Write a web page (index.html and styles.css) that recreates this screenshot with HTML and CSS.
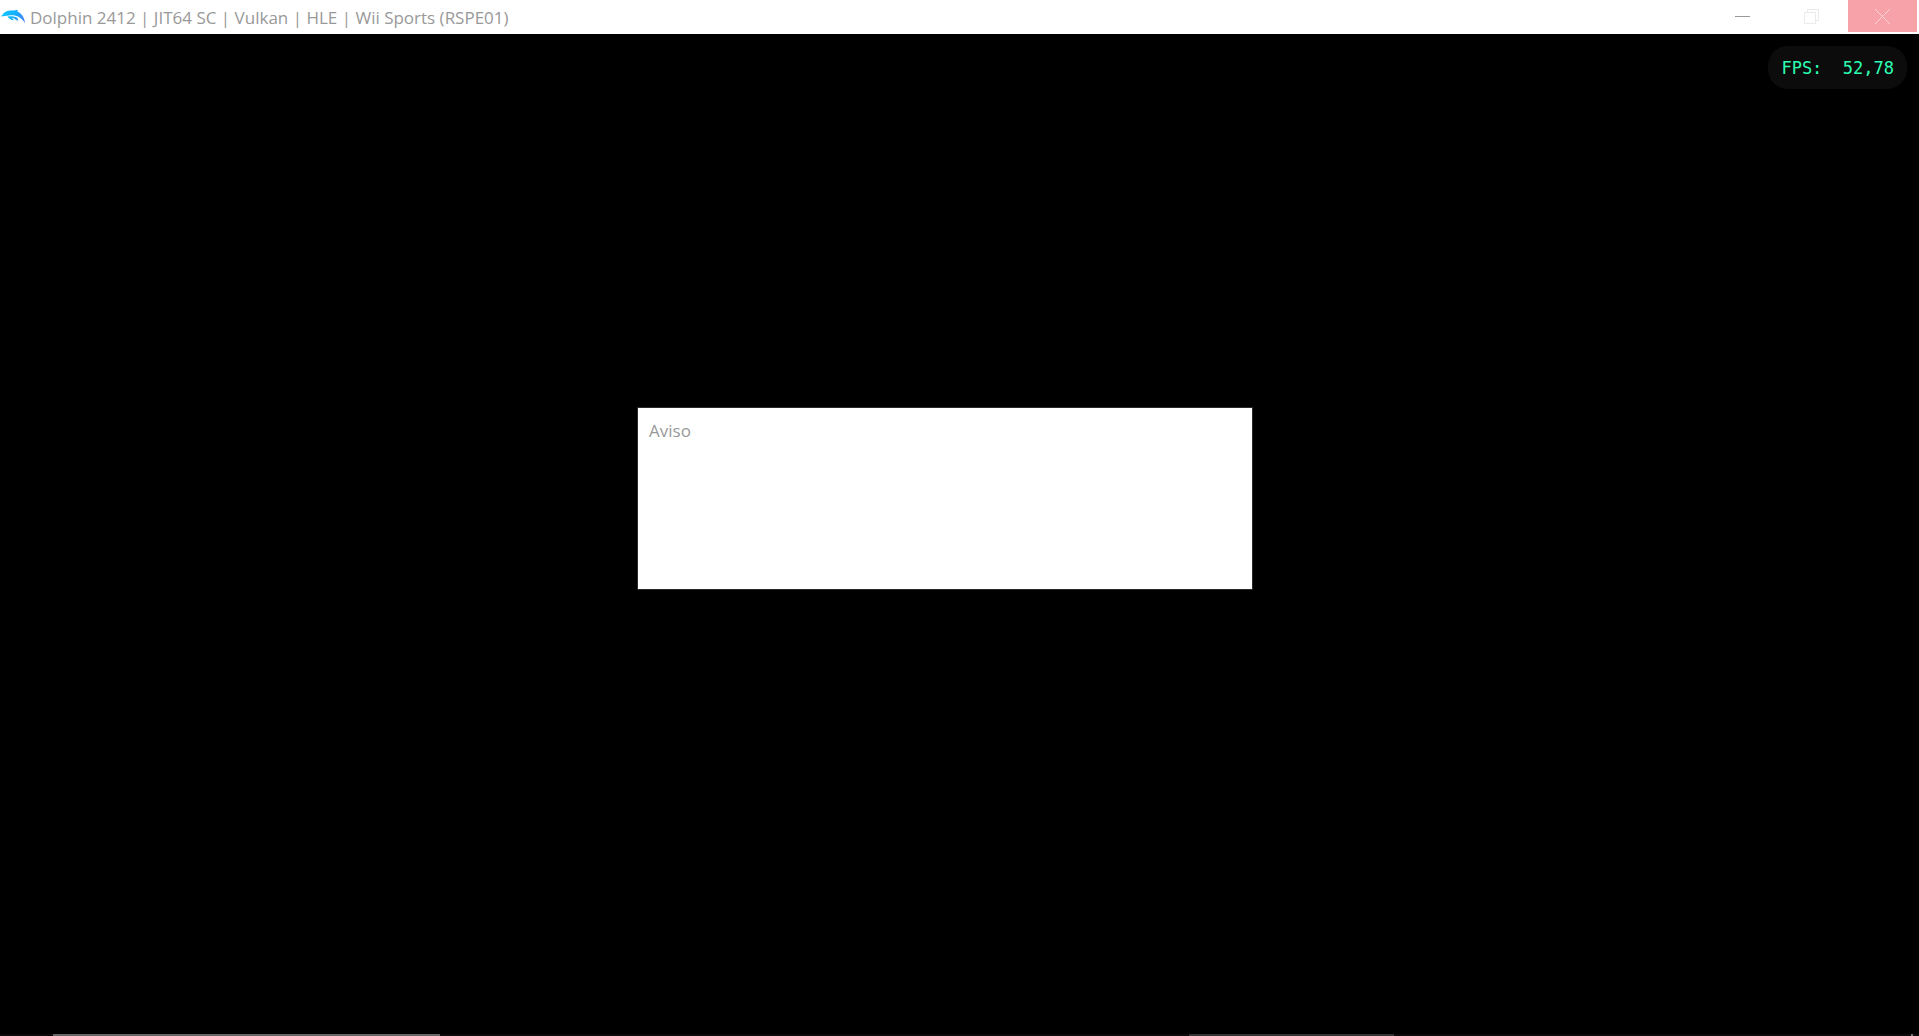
FILE: index.html
```
<!DOCTYPE html>
<html lang="pt-BR">

<head>
    <meta charset="UTF-8">
    <meta name="viewport" content="width=device-width, initial-scale=1.0">
    <title>Dolphin 2412</title>
    <link rel="stylesheet" href="styles.css">
</head>

<body>
    <header class="titlebar">
        <svg class="app_icon" viewBox="0 0 26 16" aria-hidden="true">
            <defs>
                <linearGradient id="dolphin" x1="0" y1="0" x2="26" y2="16" gradientUnits="userSpaceOnUse">
                    <stop offset="0" stop-color="#10ccff" />
                    <stop offset=".5" stop-color="#14b0ff" />
                    <stop offset="1" stop-color="#4a6cf0" />
                </linearGradient>
            </defs>
            <path fill="url(#dolphin)" d="M1 7.500C1.500 6.500 2.500 6 3 5C4.500 2.700 7.500 1.300 11 1.400L13.500 1.600C14.800 .9 16.500 .8 18.500 1C17.500 1.400 17.200 2 17.300 2.600C21 4.200 24.500 8 25 14.300C23.500 11.500 21.500 9.500 19 8C16 6.200 12.500 5.800 9 6.400C6 6.600 3.500 7.300 1 7.500Z" />
            <path fill="url(#dolphin)" d="M7.500 7.400C10.500 6.800 14 7.200 17 8.600C17.800 9.600 18.200 10.800 18.200 11.800C16.500 11.400 15 10.500 13.800 9.300L12.200 8.800C12.500 9.800 13 10.600 13.800 11.300C11 10.900 9 9.500 7.500 7.400Z" />
        </svg>
        <h1 class="title">Dolphin 2412 | JIT64 SC | Vulkan | HLE | Wii Sports (RSPE01)</h1>
        <div class="window_btns">
            <button class="minimize" type="button" aria-label="Minimizar">
                <svg viewBox="0 0 15 15"><path d="M0 7.500H15" /></svg>
            </button>
            <button class="restore" type="button" aria-label="Restaurar">
                <svg viewBox="0 0 15 15"><path d="M.5 3.500H11.500V14.500H.5ZM3.500 3.500V.5H14.500V11.500H11.500" /></svg>
            </button>
            <button class="close" type="button" aria-label="Fechar">
                <svg viewBox="0 0 15 15"><path d="M0 0L15 15M15 0L0 15" /></svg>
            </button>
        </div>
    </header>

    <main class="screen">
        <div class="fps">FPS:  52,78</div>
        <section class="dialog" role="dialog" aria-labelledby="dialog_title">
            <h2 class="title" id="dialog_title">Aviso</h2>
        </section>
    </main>

    <footer class="edge">
        <span class="edge_left"></span>
        <span class="edge_mid"></span>
        <span class="edge_tick"></span>
    </footer>
</body>

</html>
```

FILE: styles.css
```
* {
    margin: 0;
    padding: 0;
    box-sizing: border-box;
}

body {
    display: flex;
    flex-direction: column;
    min-height: 100vh;
    background: #000;
    font-family: "Open Sans", "Noto Sans", sans-serif;
}

.titlebar {
    display: flex;
    align-items: flex-start;
    height: 34px;
    padding-right: 2px;
    background: #fff;
}

.app_icon {
    width: 26px;
    height: 16px;
    margin-top: 9px;
}

.title {
    font-size: 17px;
    font-weight: 400;
    line-height: 36px;
    color: #999;
}

.titlebar .title {
    flex: 1;
    padding-left: 4px;
}

.window_btns {
    display: flex;
}

.window_btns button {
    display: flex;
    align-items: center;
    justify-content: center;
    width: 69px;
    height: 32px;
    border: none;
    background: #fff;
    color: #999;
}

.window_btns .restore {
    color: #ebebeb;
}

.window_btns .close {
    margin-left: 2px;
    background: #f7a1a9;
    color: #fdd5d9;
}

.window_btns svg {
    width: 15px;
    height: 15px;
    fill: none;
    stroke: currentColor;
}

.screen {
    position: relative;
    flex: 1;
}

/* fps counter over the game picture */
.fps {
    position: absolute;
    top: 12px;
    right: 12px;
    padding: 1px 13px 0;
    border-radius: 20px;
    background: #0c0c0c;
    color: #2dffb3;
    font: 17px/42px "DejaVu Sans Mono", monospace;
    white-space: pre;
}

.dialog {
    position: absolute;
    top: 373px;
    left: 637px;
    width: 616px;
    height: 183px;
    padding: 5px 11px;
    border: 1px solid #2b2b2b;
    background: #fff;
}

/* strip of the taskbar that shows under the window */
.edge {
    display: flex;
    height: 2px;
    padding: 0 6px 0 53px;
    background: #0d0a0c;
}

.edge_left {
    width: 387px;
    background: #666;
}

.edge_mid {
    width: 205px;
    margin-left: 749px;
    background: #333;
}

.edge_tick {
    width: 2px;
    margin-left: auto;
    background: #777;
}
```
